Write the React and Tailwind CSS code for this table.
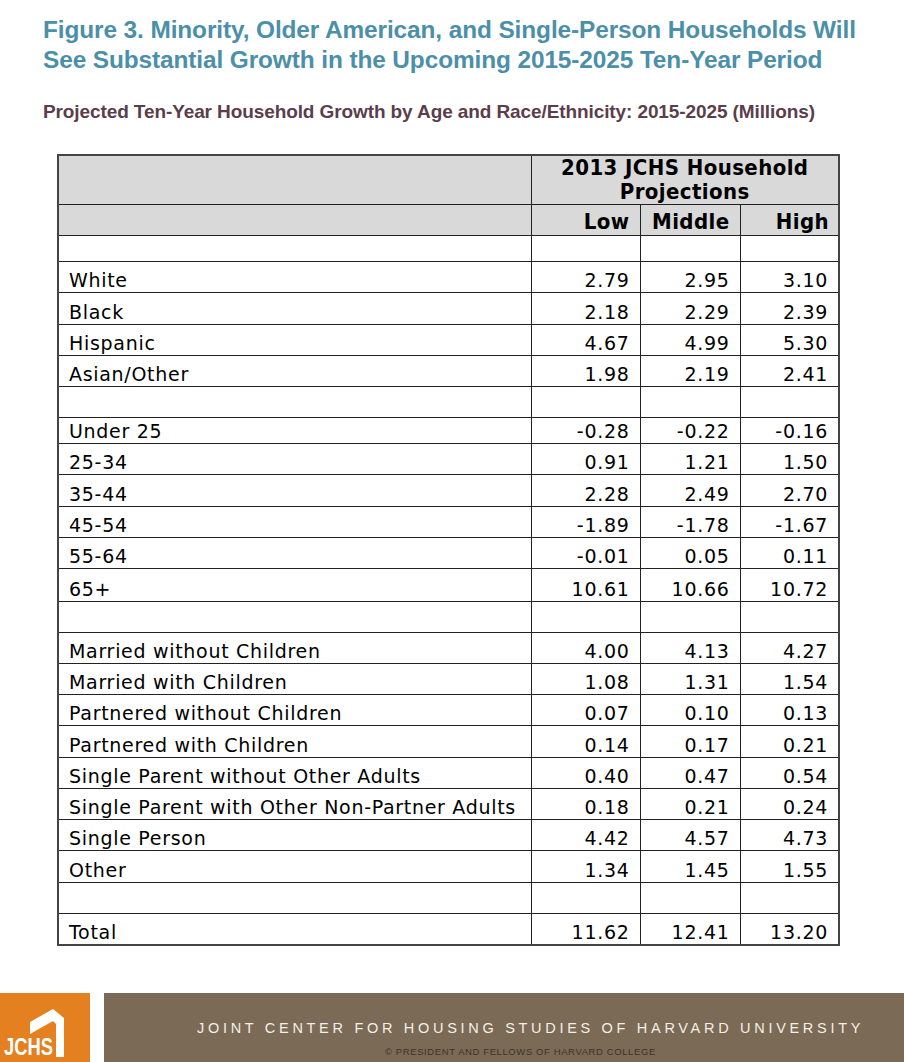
const rows = [
  { blank: true, h: 'h-[26px]' },
  { label: 'White', v: ['2.79', '2.95', '3.10'] },
  { label: 'Black', v: ['2.18', '2.29', '2.39'], h: 'h-[32px]' },
  { label: 'Hispanic', v: ['4.67', '4.99', '5.30'] },
  { label: 'Asian/Other', v: ['1.98', '2.19', '2.41'] },
  { blank: true },
  { label: 'Under 25', v: ['-0.28', '-0.22', '-0.16'], h: 'h-[26px]' },
  { label: '25-34', v: ['0.91', '1.21', '1.50'] },
  { label: '35-44', v: ['2.28', '2.49', '2.70'], h: 'h-[32px]' },
  { label: '45-54', v: ['-1.89', '-1.78', '-1.67'] },
  { label: '55-64', v: ['-0.01', '0.05', '0.11'] },
  { label: '65+', v: ['10.61', '10.66', '10.72'], h: 'h-[33px]' },
  { blank: true },
  { label: 'Married without Children', v: ['4.00', '4.13', '4.27'] },
  { label: 'Married with Children', v: ['1.08', '1.31', '1.54'] },
  { label: 'Partnered without Children', v: ['0.07', '0.10', '0.13'] },
  { label: 'Partnered with Children', v: ['0.14', '0.17', '0.21'], h: 'h-[32px]' },
  { label: 'Single Parent without Other Adults', v: ['0.40', '0.47', '0.54'] },
  { label: 'Single Parent with Other Non-Partner Adults', v: ['0.18', '0.21', '0.24'] },
  { label: 'Single Person', v: ['4.42', '4.57', '4.73'] },
  { label: 'Other', v: ['1.34', '1.45', '1.55'], h: 'h-[32px]' },
  { blank: true },
  { label: 'Total', v: ['11.62', '12.41', '13.20'] },
]

const cell = 'border border-[#222] align-bottom pb-[1px]'

const Logo = () => (
  <svg width="90" height="69" viewBox="0 0 90 69">
    <rect width="90" height="69" fill="#e4801f" />
    <polygon
      points="30,29 53,16 64,25 64,64 56,64 56,31 53,28 30,41"
      fill="#fff"
    />
    <text
      x="4"
      y="62"
      fill="#fff"
      fontFamily="'Liberation Sans', Arial, sans-serif"
      fontSize="23"
      fontWeight="700"
      textLength="49"
      lengthAdjust="spacingAndGlyphs"
    >
      JCHS
    </text>
  </svg>
)

export default function App() {
  return (
    <div className="w-[904px] h-[1062px] bg-white flex flex-col overflow-hidden">
      <div className="pl-[43px] pt-[15px]">
        <h1 className="text-[#4b8fa9] font-bold text-[24.4px] leading-[30px] tracking-[-0.1px] font-['Liberation_Sans',Arial,sans-serif]">
          Figure 3. Minority, Older American, and Single-Person Households Will
          <br />
          See Substantial Growth in the Upcoming 2015-2025 Ten-Year Period
        </h1>
        <p className="mt-[26px] text-[#5a3e4c] font-bold text-[19px] leading-[22px] tracking-[-0.1px] font-['Liberation_Sans',Arial,sans-serif]">
          Projected Ten-Year Household Growth by Age and Race/Ethnicity: 2015-2025 (Millions)
        </p>
      </div>

      <div className="pl-[57px] mt-[31px]">
        <table className="border-collapse border-2 border-[#444] text-[19px] tracking-[0.7px] text-black font-['DejaVu_Sans',Verdana,sans-serif] table-fixed w-[781px]">
          <colgroup>
            <col className="w-[473px]" />
            <col className="w-[109px]" />
            <col className="w-[100px]" />
            <col className="w-[99px]" />
          </colgroup>
          <thead className="bg-[#d9d9d9] font-bold tracking-[0.4px] font-['DejaVu_Sans_Condensed','DejaVu_Sans',sans-serif] [font-stretch:condensed]">
            <tr className="h-[49px]">
              <th className={cell}></th>
              <th colSpan={3} className="border border-[#222] text-center leading-[24px] text-[22px] align-top pt-[0px]">
                2013 JCHS Household
                <br />
                Projections
              </th>
            </tr>
            <tr className="h-[31px]">
              <th className={cell}></th>
              <th className={`${cell} text-right pr-[10px] text-[22px] leading-[24px]`}>Low</th>
              <th className={`${cell} text-right pr-[10px] text-[22px] leading-[24px]`}>Middle</th>
              <th className={`${cell} text-right pr-[9px] text-[22px] leading-[24px]`}>High</th>
            </tr>
          </thead>
          <tbody>
            {rows.map((r, i) => (
              <tr key={i} className={r.h || 'h-[31px]'}>
                <td className={`${cell} pl-[10px] leading-[22px]`}>{r.label || ''}</td>
                {[0, 1, 2].map((j) => (
                  <td key={j} className={`${cell} text-right pr-[10px] leading-[22px]`}>
                    {r.v ? r.v[j] : ''}
                  </td>
                ))}
              </tr>
            ))}
          </tbody>
        </table>
      </div>

      <div className="mt-auto flex gap-[14px] h-[69px]">
        <Logo />
        <div className="flex-1 bg-[#7b6a55] flex flex-col items-start pt-[26px]">
          <div className="pl-[93px] text-[#f3efe9] text-[14.5px] tracking-[3.7px] leading-[18px] whitespace-nowrap font-['Liberation_Sans',Arial,sans-serif]">
            JOINT CENTER FOR HOUSING STUDIES OF HARVARD UNIVERSITY
          </div>
          <div className="pl-[281px] mt-[10px] text-[#3d332a] text-[9.5px] tracking-[0.6px] leading-[10px] whitespace-nowrap font-['Liberation_Sans',Arial,sans-serif]">
            © PRESIDENT AND FELLOWS OF HARVARD COLLEGE
          </div>
        </div>
      </div>
    </div>
  )
}
